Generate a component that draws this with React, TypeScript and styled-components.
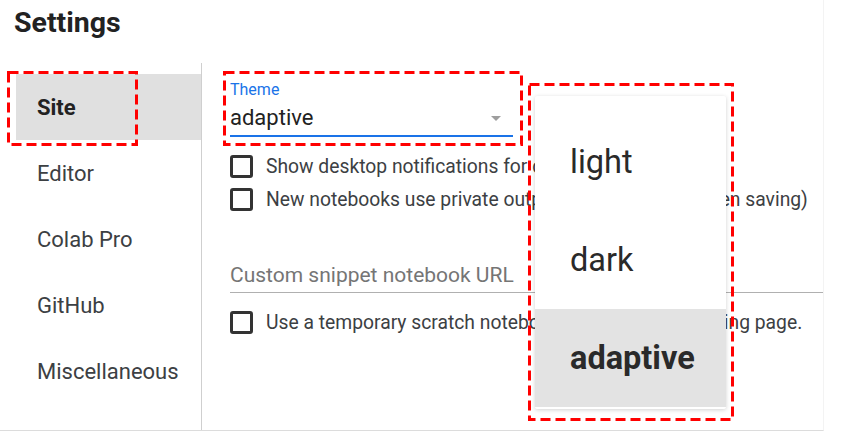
import React from 'react';
import styled, { createGlobalStyle } from 'styled-components';

const GlobalStyle = createGlobalStyle`
  html, body {
    margin: 0;
    padding: 0;
    background: #fff;
  }
  body {
    font-family: Roboto, "Liberation Sans", Arial, sans-serif;
    color: #3c4043;
  }
  * {
    box-sizing: border-box;
  }
`;

// Page shell
const Page = styled.div`
  position: relative;
  width: 845px;
  height: 436px;
  overflow: hidden;
  background: #fff;
`;

const Frame = styled.div`
  width: 824px;
  height: 431px;
  border-right: 1px solid #f3f3f3;
  border-bottom: 1px solid #dcdcdc;
  display: flex;
  flex-direction: column;
`;

const Title = styled.h1`
  margin: 0;
  padding: 6px 0 24px 14px;
  font-size: 28.5px;
  line-height: 33px;
  font-weight: 700;
  color: #222;
`;

const Body = styled.div`
  flex: 1;
  display: flex;
`;

// Left nav
const Sidebar = styled.nav`
  width: 202px;
  border-right: 1px solid #cfcfcf;
  padding-top: 11px;
  display: flex;
  flex-direction: column;
`;

const NavItem = styled.div<{ $active?: boolean }>`
  height: 66px;
  display: flex;
  align-items: center;
  margin-left: ${p => (p.$active ? '16px' : '0')};
  padding-left: ${p => (p.$active ? '21px' : '37px')};
  background: ${p => (p.$active ? '#e0e0e0' : 'transparent')};
  font-size: 22px;
  font-weight: ${p => (p.$active ? 700 : 400)};
  color: ${p => (p.$active ? '#222' : '#3c4043')};
`;

// Right content
const Content = styled.div`
  flex: 1;
  padding: 18px 0 0 28px;
  display: flex;
  flex-direction: column;
`;

const SelectField = styled.div`
  width: 283px;
  border-bottom: 2px solid #1a73e8;
  padding-bottom: 4px;
`;

const FieldLabel = styled.div`
  font-size: 16px;
  line-height: 18px;
  color: #1a73e8;
`;

const SelectValue = styled.div`
  margin-top: 6px;
  display: flex;
  align-items: center;
  justify-content: space-between;
  font-size: 22px;
  line-height: 26px;
  color: #222;
`;

const Caret = styled.span`
  width: 0;
  height: 0;
  margin-right: 12px;
  border-left: 5px solid transparent;
  border-right: 5px solid transparent;
  border-top: 5px solid #9e9e9e;
`;

const CheckRow = styled.label<{ $top?: number }>`
  height: 33px;
  margin-top: ${p => p.$top ?? 0}px;
  display: flex;
  align-items: center;
  gap: 13px;
  font-size: 19.3px;
  white-space: nowrap;
  color: #3c4043;
`;

const Box = styled.span`
  flex: none;
  width: 23px;
  height: 23px;
  border: 3px solid #333;
  border-radius: 3px;
`;

const TextInput = styled.div`
  margin-top: 46px;
  padding-bottom: 4px;
  border-bottom: 1px solid #b0b0b0;
  font-size: 21px;
  line-height: 26px;
  color: #757575;
`;

// Open dropdown menu
const Menu = styled.div`
  position: absolute;
  left: 535px;
  top: 96px;
  width: 191px;
  height: 313px;
  padding: 17px 0 2px;
  background: #fff;
  box-shadow: 0 1px 4px rgba(0, 0, 0, 0.18);
  border-radius: 2px;
`;

const MenuItem = styled.div<{ $selected?: boolean }>`
  height: 98px;
  line-height: 98px;
  padding-left: 35px;
  font-size: 32.5px;
  font-weight: ${p => (p.$selected ? 700 : 400)};
  background: ${p => (p.$selected ? '#e3e3e3' : 'transparent')};
  color: #2a2a2a;
`;

// Red dashed annotation boxes
const Callout = styled.svg<{ $x: number; $y: number }>`
  position: absolute;
  left: ${p => p.$x}px;
  top: ${p => p.$y}px;
  overflow: visible;
  pointer-events: none;
`;

const Mark = ({ x, y, w, h }: { x: number; y: number; w: number; h: number }) => (
  <Callout $x={x} $y={y} width={w} height={h}>
    <rect
      x={1.5}
      y={1.5}
      width={w - 3}
      height={h - 3}
      fill="none"
      stroke="#ff0000"
      strokeWidth={3}
      strokeDasharray="10 5"
    />
  </Callout>
);

const navItems = ['Site', 'Editor', 'Colab Pro', 'GitHub', 'Miscellaneous'];
const themes = ['light', 'dark', 'adaptive'];

export default function App() {
  return (
    <>
      <GlobalStyle />
      <Page>
        <Frame>
          <Title>Settings</Title>
          <Body>
            <Sidebar>
              {navItems.map(item => (
                <NavItem key={item} $active={item === 'Site'}>
                  {item}
                </NavItem>
              ))}
            </Sidebar>
            <Content>
              <SelectField>
                <FieldLabel>Theme</FieldLabel>
                <SelectValue>
                  adaptive
                  <Caret />
                </SelectValue>
              </SelectField>
              <CheckRow $top={13}>
                <Box />
                Show desktop notifications for completed cells
              </CheckRow>
              <CheckRow>
                <Box />
                New notebooks use private outputs (omit outputs when saving)
              </CheckRow>
              <TextInput>Custom snippet notebook URL</TextInput>
              <CheckRow $top={13}>
                <Box />
                Use a temporary scratch notebook as the default landing page.
              </CheckRow>
            </Content>
          </Body>
        </Frame>

        <Menu>
          {themes.map(t => (
            <MenuItem key={t} $selected={t === 'adaptive'}>
              {t}
            </MenuItem>
          ))}
        </Menu>

        <Mark x={7} y={71} w={131} h={75} />
        <Mark x={223} y={71} w={300} h={75} />
        <Mark x={528} y={83} w={206} h={338} />
      </Page>
    </>
  );
}
